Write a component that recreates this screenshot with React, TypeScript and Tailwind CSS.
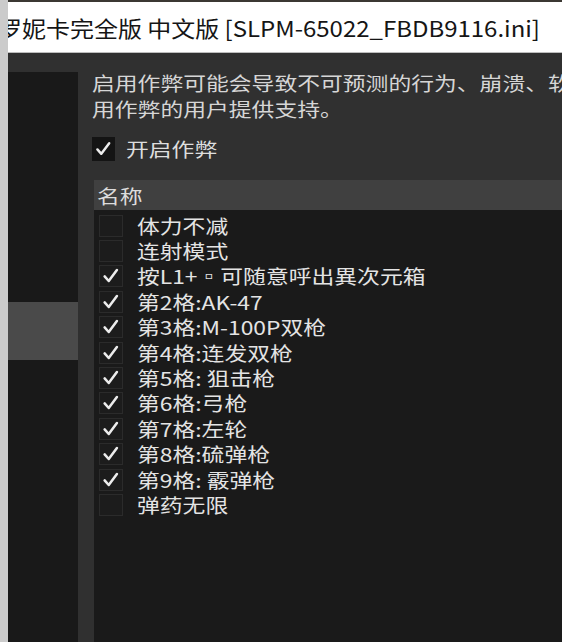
import React from "react";

const cheats = [
  { label: "体力不减", on: false },
  { label: "连射模式", on: false },
  { label: "按L1+▫可随意呼出異次元箱", on: true },
  { label: "第2格:AK-47", on: true },
  { label: "第3格:M-100P双枪", on: true },
  { label: "第4格:连发双枪", on: true },
  { label: "第5格: 狙击枪", on: true },
  { label: "第6格:弓枪", on: true },
  { label: "第7格:左轮", on: true },
  { label: "第8格:硫弹枪", on: true },
  { label: "第9格: 霰弹枪", on: true },
  { label: "弹药无限", on: false },
];

function Wide({ children, className = "" }: { children: React.ReactNode; className?: string }) {
  return (
    <span className={`inline-block origin-left scale-x-[1.2] whitespace-nowrap ${className}`}>{children}</span>
  );
}

function Check() {
  return (
    <svg viewBox="0 0 24 22" className="h-full w-full">
      <path d="M5 11.5 L9.5 16.5 L18.5 4.5" fill="none" stroke="#ececec" strokeWidth="2.8" strokeLinecap="round" strokeLinejoin="round" />
    </svg>
  );
}

export default function App() {
  return (
    <div className="flex h-[642px] w-[562px] overflow-hidden bg-[#303030] font-['Noto_Sans_CJK_SC','Noto_Sans','DejaVu_Sans',sans-serif]">
      {/* window edge */}
      <div className="w-[8px] shrink-0 bg-[#cbcbcb]" />

      <div className="flex min-w-0 flex-1 flex-col">
        {/* title bar */}
        <div className="h-[53px] shrink-0 overflow-hidden border-t-[2px] border-b border-t-[#3b3833] border-b-[#bdbdbd] bg-white">
          <div className="ml-[-10px] mt-[11px] text-[22px] leading-[28px] text-[#151515]">
            <span className="inline-block origin-left scale-x-[1.09] whitespace-nowrap">
              罗妮卡完全版 中文版 [SLPM-65022_FBDB9116.ini]
            </span>
          </div>
        </div>

        <div className="flex min-h-0 flex-1">
          {/* sidebar */}
          <div className="w-[70px] shrink-0 pt-[19px]">
            <div className="flex h-full flex-col bg-[#191919] pt-[230px]">
              <div className="h-[58px] bg-[#4a4a4a]" />
            </div>
          </div>

          {/* cheats page */}
          <div className="flex min-w-0 flex-1 flex-col overflow-hidden pl-[14px] pt-[17px]">
            <div className="text-[19px] leading-[26px] text-[#d6d6d6]">
              <div><Wide>启用作弊可能会导致不可预测的行为、崩溃、软锁定或损坏存档。我们不为启</Wide></div>
              <div><Wide>用作弊的用户提供支持。</Wide></div>
            </div>

            <div className="mt-[14px] flex items-center">
              <div className="h-[24px] w-[23px] shrink-0 bg-[#141414] p-[1px]">
                <Check />
              </div>
              <div className="ml-[11px] text-[19px] leading-[26px] text-[#dedede]">
                <Wide>开启作弊</Wide>
              </div>
            </div>

            <div className="ml-[2px] mt-[18px] flex min-h-0 flex-1 flex-col">
              <div className="flex h-[30px] shrink-0 items-center bg-[#404040] pl-[3px] pt-[2px] text-[19px] text-[#dcdcdc]">
                <Wide>名称</Wide>
              </div>
              <div className="flex-1 bg-[#1a1a1a] pl-[5px] pt-[3px]">
                {cheats.map((c) => (
                  <div key={c.label} className="flex h-[25.4px] items-center">
                    <div className="h-[22px] w-[24px] shrink-0 border border-[#2b2b2b] bg-[#1c1c1c]">
                      {c.on && <Check />}
                    </div>
                    <div className="ml-[14px] text-[19px] leading-[24px] text-[#e4e4e4]">
                      <Wide>{c.label}</Wide>
                    </div>
                  </div>
                ))}
              </div>
            </div>
          </div>
        </div>
      </div>
    </div>
  );
}
